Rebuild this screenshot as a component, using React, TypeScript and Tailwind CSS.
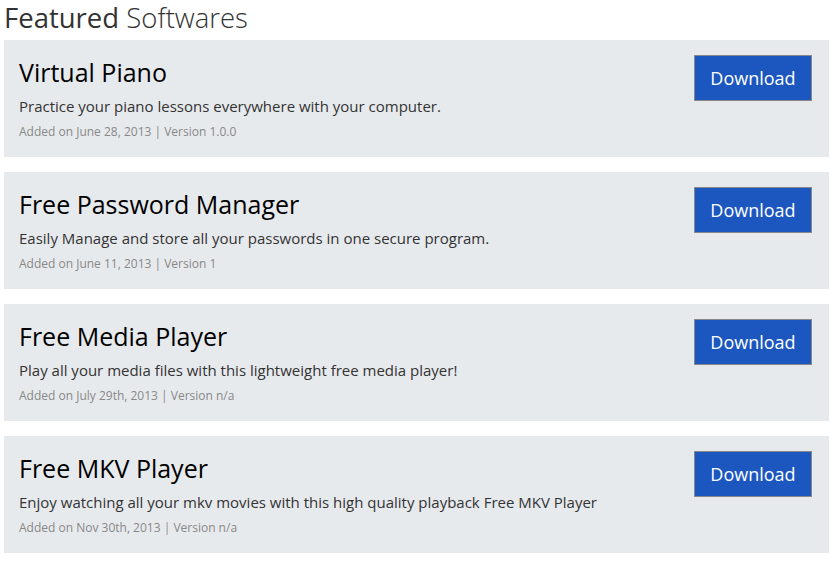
const items = [
	{
		title: "Virtual Piano",
		desc: "Practice your piano lessons everywhere with your computer.",
		meta: "Added on June 28, 2013 | Version 1.0.0",
	},
	{
		title: "Free Password Manager",
		desc: "Easily Manage and store all your passwords in one secure program.",
		meta: "Added on June 11, 2013 | Version 1",
	},
	{
		title: "Free Media Player",
		desc: "Play all your media files with this lightweight free media player!",
		meta: "Added on July 29th, 2013 | Version n/a",
	},
	{
		title: "Free MKV Player",
		desc: "Enjoy watching all your mkv movies with this high quality playback Free MKV Player",
		meta: "Added on Nov 30th, 2013 | Version n/a",
	},
]

const App = () => {
	return (
		<div className="bg-white w-[830px] h-[561px] pl-1 pr-px font-['Open_Sans',sans-serif]">
			<h1 className="text-[27.5px] leading-[36px] h-[40px] text-[#333]">
				<span className="font-normal">Featured</span> <span className="font-light">Softwares</span>
			</h1>
			<div className="flex flex-col gap-[15px]">
				{items.map((item) => (
					<div key={item.title} className="bg-[#e7eaed] h-[117px] flex justify-between pl-[15px] pr-[17px] pt-[15px]">
						<div className="flex flex-col">
							<h2 className="text-[25px] leading-[34px] text-black">{item.title}</h2>
							<p className="text-[15px] leading-[22px] text-[#333] mt-[6px]">{item.desc}</p>
							<p className="text-[12px] leading-[18px] text-[#888] mt-[6px]">{item.meta}</p>
						</div>
						<button className="w-[118px] h-[46px] bg-[#1b57bf] border border-[#888] text-white text-[18px] shrink-0">
							Download
						</button>
					</div>
				))}
			</div>
		</div>
	)
}

export default App
